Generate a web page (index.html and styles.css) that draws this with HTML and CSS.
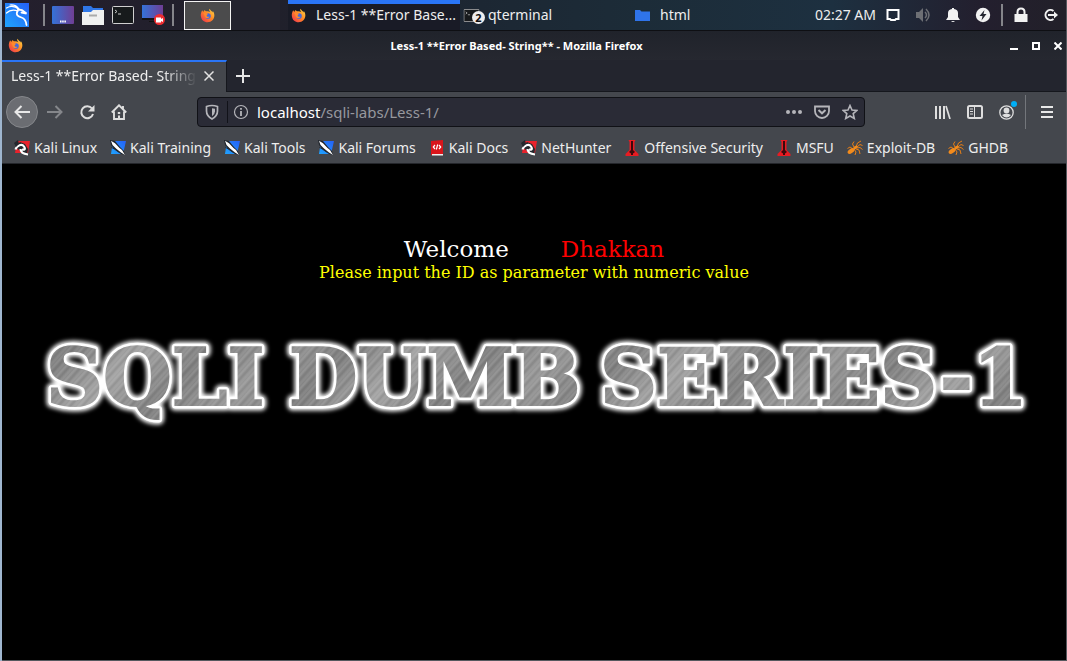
FILE: index.html
```
<!DOCTYPE html>
<html lang="en">
<head>
<meta charset="utf-8">
<title>Less-1 **Error Based- String**</title>
<link rel="stylesheet" href="styles.css">
</head>
<body>
<svg class="defs" aria-hidden="true">
  <defs>
    <linearGradient id="blue" x1="0" y1="1" x2="1" y2="0"><stop offset="0" stop-color="#20a4ff"/><stop offset="1" stop-color="#2560f5"/></linearGradient>
    <linearGradient id="desk" x1="0" y1="0" x2="1" y2="0"><stop offset="0" stop-color="#3473d8"/><stop offset="1" stop-color="#703e94"/></linearGradient>
    <linearGradient id="fire" x1="1" y1="0" x2="0" y2="1"><stop offset="0" stop-color="#ffe04a"/><stop offset=".45" stop-color="#ff8a24"/><stop offset="1" stop-color="#ee2b55"/></linearGradient>
    <symbol id="firefox" viewBox="0 0 16 16">
      <path fill="url(#fire)" d="M10 .8c-.6 1.700.2 2.600 1.200 3.600C9.700 3.500 8.500 3.300 7 3.400 6 3.300 5.200 2.700 4.900 2 4.300 2.600 4 3.200 3.900 3.900 3.100 3.700 2.600 3.100 2.500 2.300 1.200 4 .7 6 .9 8.500c.3 4 3.300 6.700 7.200 6.700 4.200 0 7.200-3.100 7.200-7.100 0-2.300-.8-3.700-1.800-4.800l.1 1.500C12.500 3.200 11.200 2.600 10 .8z"/>
      <circle cx="8.500" cy="8.500" r="3" fill="#4169df"/>
      <path fill="#ff8a2e" d="M3.500 5.500c1.600-.7 3-.5 4 .4h1.200c-.2 1-1.200 1.200-1.500 1.700-.5 1.300 1.300 2.300 2.900 1.600-.9 1.900-3.500 2.100-4.600.6C4.600 8.500 5 7 3.500 5.500z"/>
    </symbol>
    <symbol id="terminal" viewBox="0 0 22 18">
      <rect x=".5" y=".5" width="21" height="17" rx="1" fill="#171a1c" stroke="#d0d0d0"/>
      <path d="M3 4l2 1.500L3 7M6 8h3" fill="none" stroke="#c8c8c8"/>
    </symbol>
    <symbol id="magnet" viewBox="0 0 16 16">
      <path fill="#e8222c" d="M3 1h13l-2 12H1z"/>
      <path d="M1 7l5-5 5 2 3 5-1 6-5-2-3-3z" fill="#24282e"/>
      <path d="M1.500 9.500C3 5 8 3.500 10 6.500s0 3.500-2 3M6.500 9c0 4 3.500 5 7.500 5.500" fill="none" stroke="#fff" stroke-width="2.200"/>
      <path d="M0 3l4-3 1 4-3 3z" fill="#24282e"/>
    </symbol>
    <symbol id="dragon" viewBox="0 0 16 16">
      <path fill="url(#blue)" d="M3 1h13l-3 13H1z"/>
      <path d="M0 0l5 1 5 6 4 4 1 4-4-1-6-4-4-5z" fill="#20252c"/>
      <path d="M1 .8l4 2.400L9.500 8l2.500 2 3 5-4-2.500L6 8.500 2.500 5z" fill="#fff"/>
      <path d="M1.500 7.500l4.500 2 3 3" stroke="#20252c" fill="none"/>
    </symbol>
    <symbol id="docs" viewBox="0 0 14 16">
      <path fill="#d9151b" d="M1 1l12-1v15H1z"/><path fill="#eee" d="M2 14h11v1.500H2z"/>
      <path d="M5 5L3.300 7 5 9M9 5l1.700 2L9 9M7.700 4.500L6.300 9.500" fill="none" stroke="#fff" stroke-width="1.200"/>
    </symbol>
    <symbol id="offsec" viewBox="0 0 14 16">
      <path fill="#e81b22" d="M3.500 0h7l-1 2v8l4 4v2H.5v-2l4-4V2z"/>
      <path fill="#3c090c" d="M6 1h2v9l2 2-2 1.500V15H6v-1.500L4 12l2-2z"/>
    </symbol>
    <symbol id="ant" viewBox="0 0 16 16">
      <g fill="none" stroke="#e87f16"><path d="M6 9L3 7 .5 8.500M7 7L5.500 4 7 1.500M9 7l1.500-4L14 1M10 7l3-2.500 2.500 1M9 9l3 1 1 4M7 9l2 3-1 3M10 8l3-.5 2.500 2"/></g>
      <ellipse cx="4" cy="11" rx="3.800" ry="2.200" transform="rotate(-35 4 11)" fill="#f38b1c"/><ellipse cx="8.500" cy="7.500" rx="2.500" ry="1.500" transform="rotate(-30 8.500 7.500)" fill="#f38b1c"/>
    </symbol>
  </defs>
</svg>
<div class="desktop">
  <header class="panel">
    <div class="launchers">
      <button class="kali" aria-label="Applications"><svg viewBox="0 0 24 24" width="24" height="24"><rect width="24" height="24" fill="url(#blue)"/><g fill="none" stroke="#fff" stroke-linecap="round"><path d="M1.500 5C6 2.500 10 3 14 6.500M1.500 10C5 6.500 9 6.500 13 8M5 2c5-.5 7 1 9 4" stroke-width="1.200"/><path d="M13 6.500l4 .5 4.500 3.500-5-1M12.500 8c-2 4 .5 5.500 4 6.500s4.500 3 5 7.500" stroke-width="1.800"/></g></svg></button>
      <span class="bar"></span>
      <button aria-label="Show desktop"><svg width="22" height="18" viewBox="0 0 22 18"><rect width="22" height="18" rx="1" fill="url(#desk)"/><path d="M8 15.500h6" stroke="#fff" stroke-width="2" stroke-dasharray="1.500 .7"/></svg></button>
      <button aria-label="Files"><svg width="22" height="20" viewBox="0 0 22 20"><path d="M1 1h8l2 2h10v7H1z" fill="#2f77e8"/><path d="M0 7h9l2-2h11v15H0z" fill="#f0f0f0"/><path d="M7 10.500h8" stroke="#aaa" stroke-width="2"/></svg></button>
      <button aria-label="Terminal"><svg width="22" height="18"><use href="#terminal"/></svg></button>
      <button aria-label="Screen recorder"><svg width="24" height="20" viewBox="0 0 24 20"><rect width="21" height="13" fill="url(#desk)"/><path d="M0 13h21v2H0zM7 16h6v1H7z" fill="#111"/><circle cx="17.500" cy="14.500" r="5.500" fill="#ee2c31"/><path d="M14 12.500h5v1.500l2-1v4l-2-1v1.500h-5z" fill="#fff"/></svg></button>
      <span class="bar"></span>
    </div>
    <button class="workspace" aria-label="Workspace 1"><svg width="15" height="15"><use href="#firefox"/></svg></button>
    <span class="workspace-idle"></span>
    <nav class="tasks">
      <button class="task active"><svg width="15" height="15"><use href="#firefox"/></svg><span>Less-1 **Error Base...</span></button>
      <button class="task term"><span class="stack"><svg width="17" height="13" viewBox="0 0 22 18"><use href="#terminal"/></svg><b>2</b></span><span>qterminal</span></button>
      <button class="task"><svg width="15" height="12" viewBox="0 0 15 12"><path d="M0 1h5l1.500 1.500H15V12H0z" fill="#2f74ea"/></svg><span>html</span></button>
    </nav>
    <div class="tray">
      <time>02:27 AM</time>
      <svg width="14" height="12" viewBox="0 0 14 12"><path d="M1.500 1h11v9H10l-1 1H5l-1-1H1.500z" fill="none" stroke="#fff" stroke-width="2"/></svg>
      <svg width="16" height="16" viewBox="0 0 16 16"><path d="M1 5h3l4-4v14l-4-4H1z" fill="#6d6f74"/><path d="M10 5q3 3 0 6M11 2q6 6 0 12" fill="none" stroke="#6d6f74" stroke-width="1.500"/></svg>
      <svg width="14" height="16" viewBox="0 0 14 16"><path d="M0 13l2-3V6q0-3.500 4-4V1h2v1q4 .5 4 4v4l2 3zM5 14h4q-2 2-4 0z" fill="#f2f2f2"/></svg>
      <svg width="16" height="16" viewBox="0 0 16 16"><circle cx="8" cy="8" r="7.200" fill="#f2f2f2"/><path d="M9.500 3L4.500 9h3l-1 4.500L11.500 7h-3z" fill="#23252f"/></svg>
      <span class="bar"></span>
      <svg width="14" height="16" viewBox="0 0 14 16"><path d="M.5 7h13v8H.5z" fill="#f2f2f2"/><path d="M3.500 8V5q0-3.500 3.500-3.500T10.500 5v3" fill="none" stroke="#f2f2f2" stroke-width="2"/></svg>
      <svg width="15" height="14" viewBox="0 0 15 14"><path d="M10.500 3A5 5 0 1 0 10.500 11" fill="none" stroke="#f2f2f2" stroke-width="2"/><path d="M5 6h6V3.500L15 7l-4 3.500V8H5z" fill="#f2f2f2"/></svg>
    </div>
  </header>

  <div class="titlebar">
    <svg width="15" height="15"><use href="#firefox"/></svg>
    <h1>Less-1 **Error Based- String** - Mozilla Firefox</h1>
    <div class="window-buttons">
      <button aria-label="Minimize"><svg width="8" height="8" viewBox="0 0 8 8"><path d="M0 7h8" stroke="#fff" stroke-width="2"/></svg></button>
      <button aria-label="Maximize"><svg width="8" height="8" viewBox="0 0 8 8"><path d="M1 1h6v6H1z" fill="none" stroke="#fff" stroke-width="2"/></svg></button>
      <button aria-label="Close"><svg width="8" height="8" viewBox="0 0 8 8"><path d="M.5.5l7 7m0-7l-7 7" stroke="#fff" stroke-width="2"/></svg></button>
    </div>
  </div>

  <div class="tabs">
    <div class="tab"><span class="tab-label">Less-1 **Error Based- String</span><button aria-label="Close tab"><svg width="10" height="10" viewBox="0 0 10 10"><path d="M.5.5l9 9m0-9l-9 9" stroke="#e2e2e2" stroke-width="1.500"/></svg></button></div>
    <button class="new-tab" aria-label="New tab"><svg width="14" height="14" viewBox="0 0 14 14"><path d="M7 0v14M0 7h14" stroke="#e6e6e6" stroke-width="2"/></svg></button>
  </div>

  <div class="toolbar">
    <div class="nav-buttons">
      <button class="back" aria-label="Back"><svg width="16" height="14" viewBox="0 0 16 14"><path d="M16 7H1.500M7.500 1l-6 6 6 6" fill="none" stroke="#e8e8e8" stroke-width="2"/></svg></button>
      <button aria-label="Forward"><svg width="16" height="14" viewBox="0 0 16 14"><path d="M0 7h14.500M8.500 1l6 6-6 6" fill="none" stroke="#85878b" stroke-width="2"/></svg></button>
      <button aria-label="Reload"><svg width="16" height="16" viewBox="0 0 16 16"><path d="M13 4.500A6 6 0 1 0 14 10" fill="none" stroke="#dedede" stroke-width="2"/><path d="M15.500 1v6.500H9z" fill="#dedede"/></svg></button>
      <button aria-label="Home"><svg width="16" height="16" viewBox="0 0 16 16"><path d="M.8 8.500L8 1.300l7.200 7.200M3 7.500V15h10V7.500M12 2v3" fill="none" stroke="#dedede" stroke-width="1.900"/><path d="M6.800 8h2.400v2H6.800zM7 11.500h2V15H7z" fill="#dedede"/></svg></button>
    </div>
    <div class="urlbar">
      <svg width="14" height="16" viewBox="0 0 14 16"><path d="M1.500 2.500Q7 .5 12.500 2.500V7q0 5-5.500 8Q1.500 12 1.500 7z" fill="none" stroke="#b5b5ba" stroke-width="1.700"/><path d="M7 4.300v8q3-2 3-5V4.700z" fill="#b5b5ba"/></svg>
      <span class="divider"></span>
      <svg width="16" height="16" viewBox="0 0 16 16"><circle cx="8" cy="8" r="6.500" fill="none" stroke="#b5b5ba" stroke-width="1.200"/><path d="M8 7v5M8 4v1.800" stroke="#b5b5ba" stroke-width="1.800"/></svg>
      <a class="address" href="#"><b>localhost</b>/sqli-labs/Less-1/</a>
      <button aria-label="Page actions"><svg width="16" height="4" viewBox="0 0 16 4"><g fill="#b5b5ba"><circle cx="2" cy="2" r="2"/><circle cx="8" cy="2" r="2"/><circle cx="14" cy="2" r="2"/></g></svg></button>
      <button aria-label="Save to Pocket"><svg width="16" height="14" viewBox="0 0 16 14"><path d="M1 1.500h14V6a7 7 0 0 1-14 0z" fill="none" stroke="#b5b5ba" stroke-width="1.800"/><path d="M4.500 5L8 8.300 11.500 5" fill="none" stroke="#b5b5ba" stroke-width="2"/></svg></button>
      <button aria-label="Bookmark"><svg width="16" height="16" viewBox="0 0 16 16"><path d="M8 1.500l2 4.500 4.900.4-3.700 3.200 1.100 4.900L8 12l-4.300 2.500 1.100-4.900L1.100 6.400 6 6z" fill="none" stroke="#b5b5ba" stroke-width="1.600"/></svg></button>
    </div>
    <div class="tools">
      <button aria-label="Library"><svg width="16" height="14" viewBox="0 0 16 14"><path d="M1 1v13M5 1v13M9 1v13" stroke="#dedede" stroke-width="2"/><path d="M11 1l4 13" stroke="#dedede" stroke-width="1.700"/></svg></button>
      <button aria-label="Sidebars"><svg width="16" height="14" viewBox="0 0 16 14"><rect x="1" y="1" width="14" height="12" rx="1.500" fill="none" stroke="#dedede" stroke-width="2"/><path d="M7.500 1v12" stroke="#dedede"/><path d="M3 4h3M3 6.500h3M3 9h3" stroke="#dedede"/></svg></button>
      <button class="account" aria-label="Account"><svg width="16" height="16" viewBox="0 0 16 16"><circle cx="7.500" cy="8.500" r="6.700" fill="none" stroke="#dedede" stroke-width="1.300"/><circle cx="7.500" cy="6.500" r="2.900" fill="#dedede"/><path d="M3 11q4.500-2.500 9 0-4.500 5-9 0z" fill="#dedede"/></svg></button>
      <span class="divider"></span>
      <button aria-label="Menu"><svg width="12" height="12" viewBox="0 0 12 12"><path d="M0 1h12M0 6h12M0 11h12" stroke="#e8e8e8" stroke-width="2"/></svg></button>
    </div>
  </div>

  <nav class="bookmarks">
    <a href="#"><svg><use href="#magnet"/></svg>Kali Linux</a>
    <a href="#"><svg><use href="#dragon"/></svg>Kali Training</a>
    <a href="#"><svg><use href="#dragon"/></svg>Kali Tools</a>
    <a href="#"><svg><use href="#dragon"/></svg>Kali Forums</a>
    <a href="#"><svg><use href="#docs"/></svg>Kali Docs</a>
    <a href="#"><svg><use href="#magnet"/></svg>NetHunter</a>
    <a href="#"><svg><use href="#offsec"/></svg>Offensive Security</a>
    <a href="#"><svg><use href="#offsec"/></svg>MSFU</a>
    <a href="#"><svg><use href="#ant"/></svg>Exploit-DB</a>
    <a href="#"><svg><use href="#ant"/></svg>GHDB</a>
  </nav>

  <main class="page">
    <p class="welcome"><span>Welcome</span><span class="name">Dhakkan</span></p>
    <p class="hint">Please input the ID as parameter with numeric value</p>
    <svg class="banner" viewBox="0 0 1064 110" role="img" aria-label="SQLI DUMB SERIES-1">
      <defs>
        <linearGradient id="steel" gradientUnits="userSpaceOnUse" x1="0" y1="20" x2="70" y2="90" spreadMethod="reflect"><stop offset="0" stop-color="#989898"/><stop offset=".5" stop-color="#808080"/><stop offset="1" stop-color="#a4a4a4"/></linearGradient>
        <pattern id="grain" width="9" height="9" patternUnits="userSpaceOnUse" patternTransform="rotate(-48)"><path d="M0 1h9" stroke="#fff" stroke-opacity=".18"/><path d="M0 4h9" stroke="#000" stroke-opacity=".12"/><path d="M0 7h9" stroke="#fff" stroke-opacity=".1"/></pattern>
        <pattern id="brushed" width="1064" height="110" patternUnits="userSpaceOnUse"><rect width="1064" height="110" fill="url(#steel)"/><rect width="1064" height="110" fill="url(#grain)"/></pattern>
        <filter id="glow" x="-5%" y="-30%" width="110%" height="160%"><feGaussianBlur stdDeviation="2"/></filter>
        <text id="series" class="series" y="77"><tspan x="44">SQLI</tspan><tspan x="287">DUMB</tspan><tspan x="598">SERIES-1</tspan></text>
      </defs>
      <use href="#series" class="halo"/>
      <use href="#series" class="edge"/>
      <use href="#series" class="metal"/>
    </svg>
  </main>
</div>
</body>
</html>
```
FILE: styles.css
```
* { box-sizing: border-box; }
body { margin: 0; background: #000; font: 14px/20px "Noto Sans", sans-serif; color: #eee; }
button { display: flex; align-items: center; justify-content: center; padding: 0; border: 0; background: none; color: inherit; font: inherit; }
svg { flex: none; display: block; }
a { color: inherit; text-decoration: none; }
.defs { position: absolute; width: 0; height: 0; }
.desktop { display: flex; flex-direction: column; min-height: 100vh; border-left: 2px solid #9fb6cf; border-right: 1px solid #55585e; }

.panel { display: flex; align-items: center; height: 31px; border-bottom: 1px solid #0e0f13; background: linear-gradient(90deg, #241f2d 0%, #20202b 26%, #1c2733 45%, #1c2c38 60%, #1d3040 78%, #231f2e 92%, #222029 100%); }
.launchers { display: flex; align-items: center; gap: 8px; padding-left: 3px; }
.bar { width: 2px; height: 22px; background: #85858a; }
.launchers .bar { margin: 0 0 0 5px; }
.launchers .kali + .bar { margin: 0 -1px 0 6px; }
.launchers .bar:last-child { margin-left: -2px; }
.workspace { width: 47px; height: 29px; margin-left: 10px; border: 1px solid #f4f4f4; background: #4b4b4c; }
.workspace-idle { width: 49px; height: 30px; background: #23232e; }
.tasks { display: flex; flex: 1; margin-left: 8px; align-self: stretch; }
.task { flex: 0 1 172px; justify-content: flex-start; gap: 10px; padding: 0 3px; white-space: nowrap; }
.task.active { border-top: 4px solid #2a75f6; padding-bottom: 4px; background: #191b26; }
.task.term { gap: 8px; }
.stack { position: relative; }
.stack b { position: absolute; left: 9px; top: 2px; width: 13px; height: 13px; border-radius: 50%; background: #eee; color: #111; font-size: 11px; line-height: 13px; text-align: center; }
.tray { display: flex; align-items: center; gap: 15px; padding-right: 8px; white-space: nowrap; }
.tray time { margin-right: -5px; }
.tray .bar { margin: 0 -4px 0 -5px; }

.titlebar { display: flex; align-items: center; height: 29px; padding: 0 4px 0 6px; background: linear-gradient(#20232b, #262830); }
.titlebar h1 { flex: 1; margin: 0; font-size: 11px; line-height: 20px; font-weight: bold; text-align: center; color: #fff; }
.window-buttons { display: flex; gap: 14px; }

.tabs { display: flex; height: 32px; background: #23252e; }
.tab { display: flex; align-items: center; gap: 7px; width: 225px; padding: 0 12px 2px 9px; border-top: 2px solid #2a75f6; border-right: 1px solid #15171d; background: #44474d; }
.tab-label { flex: 1; overflow: hidden; white-space: nowrap; -webkit-mask-image: linear-gradient(90deg, #000 82%, transparent); mask-image: linear-gradient(90deg, #000 82%, transparent); }
.new-tab { width: 32px; border-bottom: 1px solid #15171d; }
.tabs::after { content: ""; flex: 1; border-bottom: 1px solid #15171d; }

.toolbar { display: flex; align-items: center; height: 40px; padding-right: 13px; background: #44474d; }
.nav-buttons { display: flex; align-items: center; gap: 16px; width: 195px; padding-left: 4px; }
.back { width: 32px; height: 32px; margin-right: -7px; border: 1px solid #85878b; border-radius: 50%; background: #6b6d72; }
.urlbar { display: flex; align-items: center; flex: 1; gap: 12px; height: 30px; padding: 0 6px 0 7px; border: 1px solid #101116; border-radius: 4px; background: #2a2b36; }
.urlbar > svg:first-child { margin-right: -4px; }
.urlbar .divider { width: 1px; height: 22px; margin-right: -7px; background: #111219; }
.address { flex: 1; margin-left: -4px; font-size: 15px; color: #97989e; }
.address b { font-weight: normal; color: #fff; }
.tools { display: flex; align-items: center; gap: 16px; margin-left: 70px; }
.tools .divider { width: 1px; height: 34px; margin: 0 -1px 0 -6px; background: #73767b; }
.account { position: relative; }
.account::after { content: ""; position: absolute; right: -2px; top: -3px; width: 6px; height: 6px; border-radius: 50%; background: #00aef5; }

.bookmarks { display: flex; align-items: center; gap: 13px; height: 32px; padding-left: 12px; border-bottom: 1px solid #24262b; background: #44474d; white-space: nowrap; }
.bookmarks a { display: flex; align-items: center; gap: 4px; }
.bookmarks svg { width: 16px; height: 16px; }

.page { flex: 1; padding-top: 71px; border-bottom: 1px solid #55585e; background: #000; font-family: "DejaVu Serif", serif; text-align: center; }
.page p { margin: 0; }
.welcome { display: flex; justify-content: center; gap: 52px; font-size: 23px; line-height: 28px; color: #fff; }
.name { color: #f00; }
.hint { font-size: 16px; line-height: 20px; color: #ff0; }
.banner { width: 100%; margin-top: 45px; }
.series { font: bold 79px "DejaVu Serif", serif; }
.halo { fill: #fff; stroke: #fff; stroke-width: 11px; stroke-linejoin: round; filter: url(#glow); }
.edge { fill: #fff; stroke: #fff; stroke-width: 7px; stroke-linejoin: round; }
.metal { fill: url(#brushed); stroke: url(#brushed); stroke-width: 2px; }
```
